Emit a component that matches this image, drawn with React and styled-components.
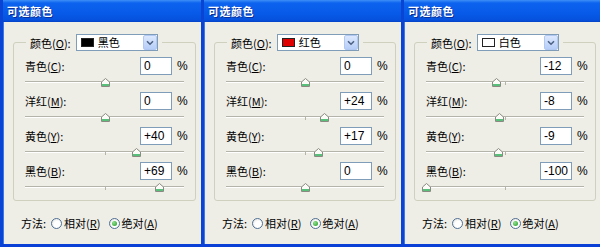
import React from "react";
import styled, { createGlobalStyle } from "styled-components";

const GlobalStyle = createGlobalStyle`
  html, body { margin: 0; padding: 0; background: #eeede6; }
  body { font-family: "Noto Sans CJK SC", "Liberation Sans", sans-serif; }
`;

const CJK = `"Noto Sans CJK SC", "Noto Sans", sans-serif`;
const LATIN = `"Liberation Sans", "Noto Sans CJK SC", sans-serif`;

const Page = styled.div`
  display: flex;
  width: 600px;
  height: 247px;
  overflow: hidden;
`;

const Panel = styled.div`
  width: ${(p) => p.$w}px;
  flex: none;
  box-sizing: border-box;
  display: flex;
  flex-direction: column;
  background: #eeede6;
  border-left: 3px solid #0a44d4;
  border-bottom: 3px solid #0a40d6;
  box-shadow: inset 1px 0 0 #3c78e8;
`;

const TitleBar = styled.div`
  height: 22px;
  flex: none;
  box-sizing: border-box;
  padding-left: 4px;
  display: flex;
  align-items: center;
  color: #fff;
  font-family: ${CJK};
  font-weight: 700;
  font-size: 11px;
  letter-spacing: 0.5px;
  background: linear-gradient(#3d8ff7 0, #0c63ee 3px, #075ae8 60%, #0652de 90%, #0442c6 100%);
  text-shadow: 1px 1px 0 #0a2f9a;
`;

const Body = styled.div`
  flex: 1;
  padding: 12px ${(p) => p.$pr}px 0 10px;
  display: flex;
  flex-direction: column;
`;

const Group = styled.fieldset`
  margin: 0;
  padding: 6px 0 3px 0;
  border: 1px solid #d0d0bf;
  border-radius: 3px;
  box-sizing: border-box;
  min-width: 0;
`;

const Legend = styled.legend`
  margin-left: 12px;
  padding: 0 4px;
  display: flex;
  align-items: center;
  gap: 5px;
  font-family: ${CJK};
  font-size: 11px;
  color: #000;
`;

const Dropdown = styled.div`
  width: 82px;
  height: 17px;
  box-sizing: border-box;
  border: 1px solid #7f9db9;
  background: #fff;
  display: flex;
  align-items: center;
  padding-left: 4px;
  gap: 4px;
`;

const Swatch = styled.span`
  width: 13px;
  height: 9px;
  box-sizing: border-box;
  border: 1px solid #222;
  background: ${(p) => p.$c};
  flex: none;
`;

const DropText = styled.span`
  flex: 1;
  font-size: 11px;
  font-family: ${CJK};
  line-height: 1;
`;

const DropButton = styled.span`
  width: 14px;
  height: 15px;
  box-sizing: border-box;
  background: linear-gradient(#dce8fd, #b6cdf7);
  border: 1px solid #b1c8f2;
  border-radius: 2px;
  display: flex;
  align-items: center;
  justify-content: center;
  flex: none;
`;

const Row = styled.div`
  display: flex;
  align-items: center;
  height: 18px;
  padding: 0 9px 0 11px;
`;

const Label = styled.span`
  flex: 1;
  font-family: ${CJK};
  font-size: 11px;
  color: #000;
  u { text-decoration: underline; }
`;

const NumBox = styled.div`
  width: 32px;
  height: 18px;
  box-sizing: border-box;
  border: 1px solid #7f9db9;
  background: #fff;
  font-family: ${LATIN};
  font-size: 12px;
  line-height: 16px;
  padding-left: 3px;
  color: #000;
`;

const Percent = styled.span`
  margin-left: 5px;
  width: 9px;
  font-family: ${LATIN};
  font-size: 12px;
  color: #000;
`;

const SliderArea = styled.div`
  position: relative;
  height: 17px;
  margin: 0 11px 0 11px;
`;

const Track = styled.div`
  position: absolute;
  left: 0;
  right: 0;
  top: 6px;
  height: 1px;
  background: #b4b4ab;
  border-bottom: 1px solid #fff;
`;

const Tick = styled.div`
  position: absolute;
  left: 50%;
  top: 6px;
  width: 1px;
  height: 4px;
  background: #b4b4ab;
`;

const Thumb = styled.svg`
  position: absolute;
  top: 3px;
  width: 9px;
  height: 9px;
  margin-left: -4px;
`;

const Method = styled.div`
  display: flex;
  align-items: center;
  height: 16px;
  margin-top: 14px;
  padding-left: 8px;
  font-family: ${CJK};
  font-size: 11px;
  color: #000;
`;

const MethodLabel = styled.span`
  margin-right: 5px;
`;

const RadioItem = styled.span`
  display: flex;
  align-items: center;
  gap: 2px;
  margin-right: 8px;
`;

const RadioCircle = styled.span`
  width: 11px;
  height: 11px;
  box-sizing: border-box;
  border-radius: 50%;
  border: 1px solid #4f6f95;
  background: radial-gradient(circle at 60% 60%, #fff 40%, #dcdcd4 100%);
  display: flex;
  align-items: center;
  justify-content: center;
  &::after {
    content: "";
    width: 5px;
    height: 5px;
    border-radius: 50%;
    background: radial-gradient(circle at 35% 35%, #8fe08f, #1f9a1f);
    display: ${(p) => (p.$on ? "block" : "none")};
  }
`;

const Chevron = () => (
  <svg width="8" height="6" viewBox="0 0 8 6">
    <path d="M1 1.2 L4 4.2 L7 1.2" fill="none" stroke="#4d6185" strokeWidth="1.6" />
  </svg>
);

const SliderThumb = ({ value }) => (
  <Thumb style={{ left: `${((value + 100) / 200) * 100}%` }} viewBox="0 0 9 9">
    <path d="M4.5 0.5 L8.5 4 L8.5 8.5 L0.5 8.5 L0.5 4 Z" fill="#fbfbf8" stroke="#8a8a82" />
    <rect x="1" y="6" width="7" height="2" fill="#58c07a" />
  </Thumb>
);

const U = ({ children }) => <u>{children}</u>;

const rowsDef = [
  { name: "青色", key: "C" },
  { name: "洋红", key: "M" },
  { name: "黄色", key: "Y" },
  { name: "黑色", key: "B" },
];

const panels = [
  { w: 201, pr: 5, swatch: "#000", color: "黑色", values: [0, 0, 40, 69] },
  { w: 200, pr: 5, swatch: "#e00000", color: "红色", values: [0, 24, 17, 0] },
  { w: 199, pr: 4, swatch: "#fff", color: "白色", values: [-12, -8, -9, -100] },
];

const fmt = (v) => (v > 0 ? `+${v}` : `${v}`);

const SelectiveColor = ({ w, pr, swatch, color, values }) => (
  <Panel $w={w}>
    <TitleBar>可选颜色</TitleBar>
    <Body $pr={pr}>
      <Group>
        <Legend>
          <span>
            颜色(<U>O</U>):
          </span>
          <Dropdown>
            <Swatch $c={swatch} />
            <DropText>{color}</DropText>
            <DropButton>
              <Chevron />
            </DropButton>
          </Dropdown>
        </Legend>
        {rowsDef.map((r, i) => (
          <React.Fragment key={r.key}>
            <Row>
              <Label>
                {r.name}(<U>{r.key}</U>):
              </Label>
              <NumBox>{fmt(values[i])}</NumBox>
              <Percent>%</Percent>
            </Row>
            <SliderArea>
              <Track />
              <Tick />
              <SliderThumb value={values[i]} />
            </SliderArea>
          </React.Fragment>
        ))}
      </Group>
      <Method>
        <MethodLabel>方法:</MethodLabel>
        <RadioItem>
          <RadioCircle />
          <span>
            相对(<U>R</U>)
          </span>
        </RadioItem>
        <RadioItem>
          <RadioCircle $on />
          <span>
            绝对(<U>A</U>)
          </span>
        </RadioItem>
      </Method>
    </Body>
  </Panel>
);

export default function App() {
  return (
    <>
      <GlobalStyle />
      <Page>
        {panels.map((p, i) => (
          <SelectiveColor key={i} {...p} />
        ))}
      </Page>
    </>
  );
}
